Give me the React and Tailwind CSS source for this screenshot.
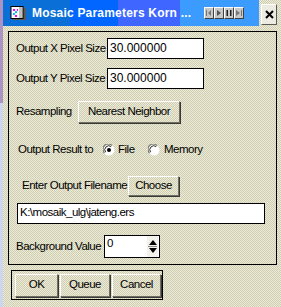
import React from "react";

const tex =
  "bg-[#dddcc6] bg-[image:repeating-conic-gradient(#ecebd8_0%_25%,#cfceb2_0%_50%)] bg-[length:2px_2px]";
const raised =
  "border border-t-white border-l-white border-r-[#6f6f64] border-b-[#6f6f64] shadow-[1px_1px_0_#3a3a36]";

function SmallBtn({ children }) {
  return (
    <div className="w-[10px] h-[12px] bg-[#c8c8c8] border border-t-white border-l-white border-r-[#404040] border-b-[#404040] flex items-center justify-center">
      <svg width="8" height="8" viewBox="0 0 8 8">{children}</svg>
    </div>
  );
}

function Radio({ on }) {
  return (
    <svg width="12" height="12" viewBox="0 0 12 12" className="shrink-0">
      <circle cx="6" cy="6" r="5.5" fill="#ffffff" />
      <path d="M1.5 9 A5 5 0 0 1 9 1.5" stroke="#7a7a70" strokeWidth="1.2" fill="none" />
      <path d="M2.6 8.2 A4 4 0 0 1 8.2 2.6" stroke="#2a2a2a" strokeWidth="1" fill="none" />
      {on && <circle cx="6" cy="6" r="2" fill="#000" />}
    </svg>
  );
}

export default function App() {
  return (
    <div
      className={`w-[281px] h-[307px] flex overflow-hidden text-black ${tex}`}
      style={{ fontFamily: '"Liberation Sans", Arial, sans-serif' }}
    >
      <div className="w-[3px] flex flex-col shrink-0">
        <div className="h-[103px] bg-[#ab94c4]" />
        <div className="flex-1 bg-[#cdd6ee]" />
      </div>
      <div className="flex-1 flex flex-col">
        {/* title */}
        <div className="flex h-[26px] items-start shrink-0">
          <div className="w-[256px] h-[26px] flex items-center bg-[linear-gradient(90deg,#0b6fd8_0_67px,#0066ff_67px_115px,#3f66ff_115px_177px,#3b9bff_177px)]">
            <svg width="17" height="15" viewBox="0 0 17 15" className="ml-[7px] shrink-0">
              <rect x="3" y="2" width="13" height="12" fill="#5a5a5a" />
              <rect x="1" y="0.5" width="12" height="12" fill="#ffffff" stroke="#000" />
              <rect x="9" y="1" width="3" height="11" fill="#c0c0c0" />
              <rect x="3" y="3" width="2" height="2" fill="#ff00ff" />
              <rect x="5" y="5" width="2" height="2" fill="#00c0ff" />
              <rect x="3" y="7" width="2" height="2" fill="#00c0ff" />
              <rect x="5" y="9" width="2" height="2" fill="#ff00ff" />
              <rect x="7" y="3" width="1" height="2" fill="#ff00ff" />
            </svg>
            <span className="ml-[5px] text-white font-bold text-[12px] leading-none tracking-[0.2px] whitespace-nowrap w-[170px]">
              Mosaic Parameters Korn ...
            </span>
            <div className="flex ml-[2px]">
              <SmallBtn>
                <rect x="1" y="1" width="1" height="6" fill="#777" />
                <path d="M6 1 L3 4 L6 7 Z" fill="#777" />
              </SmallBtn>
              <SmallBtn>
                <path d="M2 1 L6 4 L2 7 Z" fill="#555" />
              </SmallBtn>
              <SmallBtn>
                <rect x="1.5" y="1" width="1.5" height="6" fill="#222" />
                <rect x="5" y="1" width="1.5" height="6" fill="#222" />
              </SmallBtn>
              <SmallBtn>
                <path d="M1 1 L5 4 L1 7 Z" fill="#777" />
                <rect x="6" y="1" width="1" height="6" fill="#777" />
              </SmallBtn>
            </div>
          </div>
          <div className="ml-[2px] mt-[4px] w-[16px] h-[21px] bg-[#ecebe2] border border-t-white border-l-white border-r-[#5a5a55] border-b-[#5a5a55] flex items-center justify-center">
            <svg width="9" height="9" viewBox="0 0 9 9">
              <path d="M1 1 L8 8 M8 1 L1 8" stroke="#000" strokeWidth="2" />
            </svg>
          </div>
        </div>

        {/* panel */}
        <div className="ml-[5px] mt-[5px] w-[269px] h-[234px] border border-black flex flex-col pl-[7px] text-[11.5px] tracking-[-0.5px] leading-none shrink-0">
          <div className="mt-[6px] flex items-center h-[21px]">
            <span className="w-[91px] whitespace-nowrap">Output X Pixel Size</span>
            <div className="w-[97px] h-[21px] bg-white border border-black pl-[2px] pt-[3px] text-[12px] tracking-normal">30.000000</div>
          </div>
          <div className="mt-[9px] flex items-center h-[21px]">
            <span className="w-[91px] whitespace-nowrap">Output Y Pixel Size</span>
            <div className="w-[97px] h-[21px] bg-white border border-black pl-[2px] pt-[3px] text-[12px] tracking-normal">30.000000</div>
          </div>
          <div className="mt-[12px] flex items-center h-[22px]">
            <span className="w-[62px] whitespace-nowrap">Resampling</span>
            <div className={`w-[102px] h-[22px] flex items-center justify-center ${raised} ${tex}`}>
              Nearest Neighbor
            </div>
          </div>
          <div className="mt-[19px] ml-[2px] flex items-center h-[16px]">
            <span className="w-[85px] whitespace-nowrap">Output Result to</span>
            <Radio on />
            <span className="ml-[3px] w-[30px]">File</span>
            <Radio />
            <span className="ml-[4px]">Memory</span>
          </div>
          <div className="mt-[18px] ml-[6px] flex items-center h-[20px]">
            <span className="w-[106px] whitespace-nowrap">Enter Output Filename</span>
            <div className={`w-[51px] h-[20px] flex items-center justify-center ${raised} ${tex}`}>Choose</div>
          </div>
          <div className="mt-[7px] ml-[1px] w-[248px] h-[21px] bg-white border border-black pl-[2px] pt-[3px] whitespace-nowrap">
            K:\mosaik_ulg\jateng.ers
          </div>
          <div className="mt-[11px] flex items-center h-[23px]">
            <span className="w-[88px] whitespace-nowrap">Background Value</span>
            <div className="w-[56px] h-[23px] bg-white border border-black flex">
              <span className="flex-1 pl-[2px] pt-[2px]">0</span>
              <div className="w-[11px] flex flex-col items-center justify-center gap-[1px] bg-[#f2f2ea] mr-[1px]">
                <svg width="8" height="5" viewBox="0 0 8 5">
                  <path d="M0 5 L4 0 L8 5 Z" fill="#000" />
                </svg>
                <div className="w-[9px] h-px bg-[#888]" />
                <svg width="8" height="5" viewBox="0 0 8 5">
                  <path d="M0 0 L4 5 L8 0 Z" fill="#000" />
                </svg>
              </div>
            </div>
          </div>
        </div>

        {/* bottom buttons */}
        <div className="ml-[8px] mt-[5px] w-[152px] h-[30px] border border-black flex items-center pl-[3px] gap-[2px] text-[11.5px] tracking-[-0.5px] leading-none shrink-0">
          <div className={`w-[43px] h-[23px] flex items-center justify-center ${raised} ${tex}`}>OK</div>
          <div className={`w-[50px] h-[23px] flex items-center justify-center ${raised} ${tex}`}>Queue</div>
          <div className={`w-[49px] h-[23px] flex items-center justify-center ${raised} ${tex}`}>Cancel</div>
        </div>
      </div>
    </div>
  );
}
